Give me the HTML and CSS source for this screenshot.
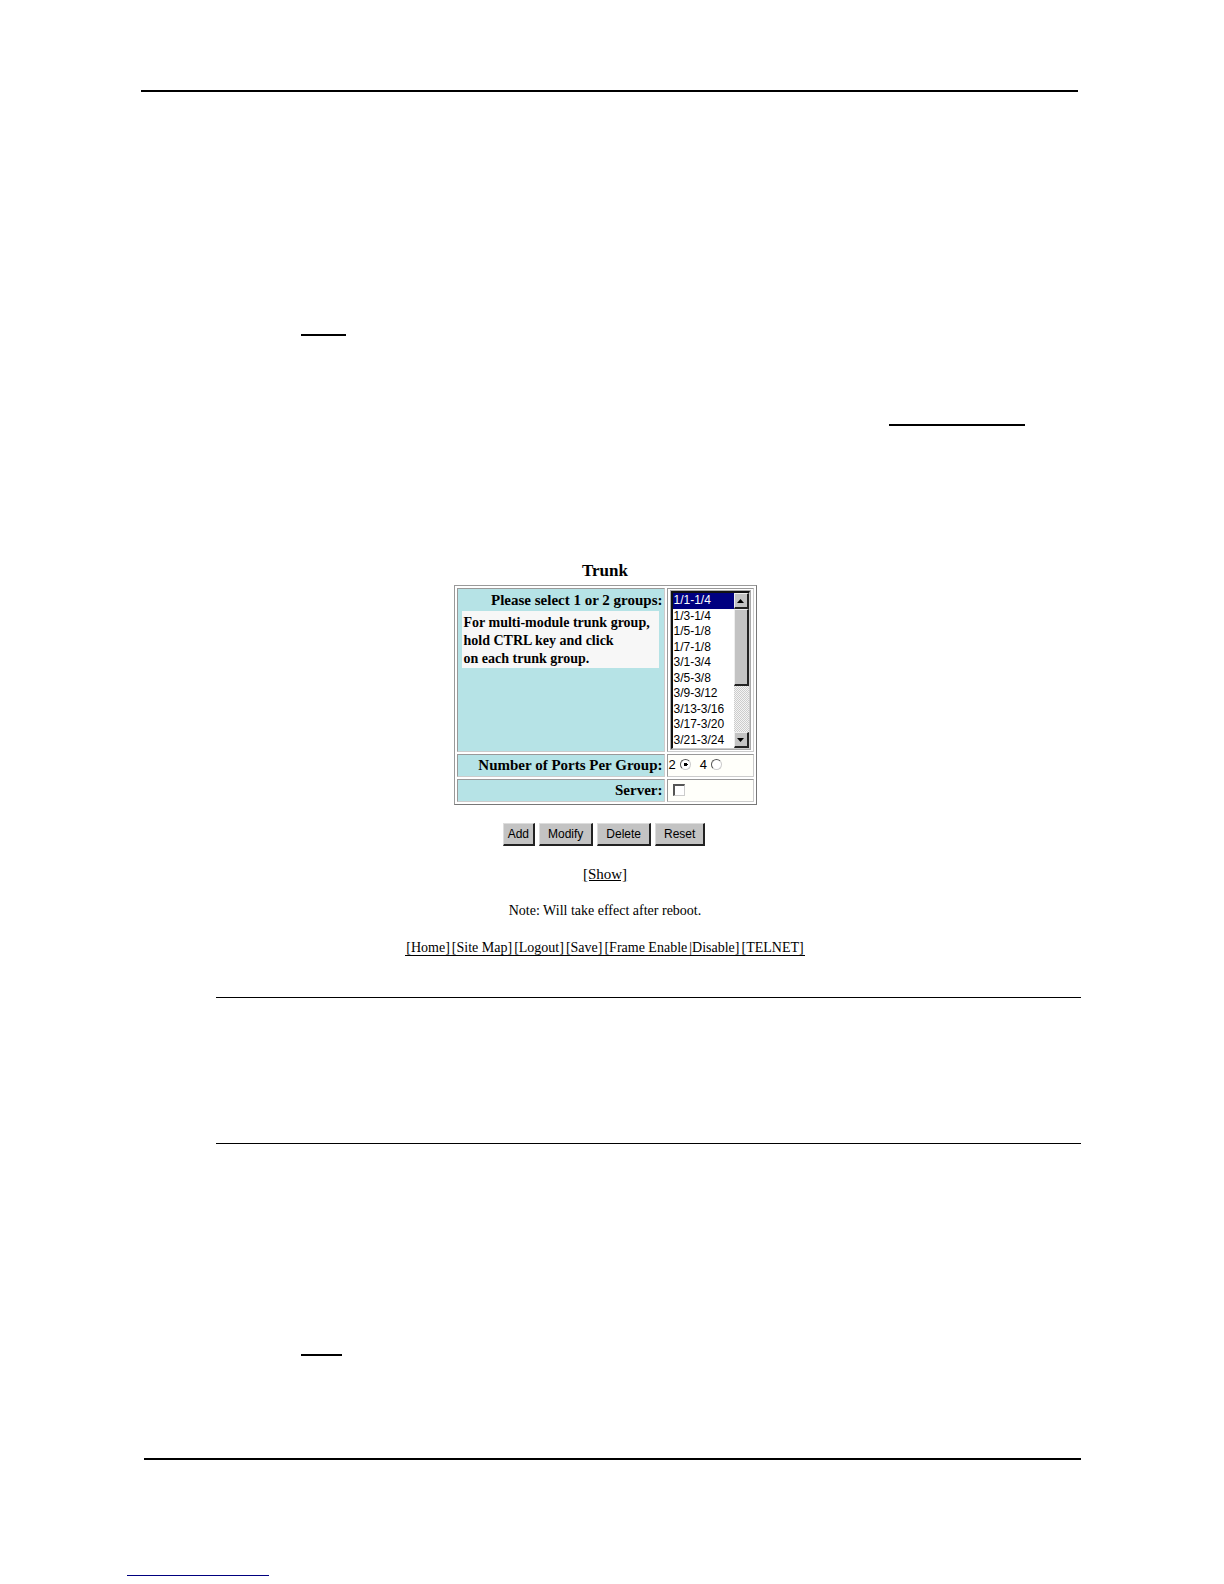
FILE: index.html
```html
<!DOCTYPE html>
<html lang="en">
<head>
  <meta charset="UTF-8" />
  <meta name="viewport" content="width=device-width, initial-scale=1.0"/>
  <title>Trunk</title>
  <link rel="stylesheet" href="styles.css">
</head>
<body>

  <div class="page">
    <hr class="rule rule-top">

    <div class="intro">
      <hr class="mark mark-first">
      <hr class="mark mark-wide">
    </div>

    <form class="trunk-form">
      <h1>Trunk</h1>

      <table class="trunk-table">
        <tr>
          <th class="group-cell">
            <label for="groups">Please select 1 or 2 groups:</label>
            <p class="hint">For multi-module trunk group,<br>hold CTRL key and click<br>on each trunk group.</p>
          </th>
          <td class="list-cell">
            <div class="list-frame">
              <select id="groups" class="group-list" size="10" multiple>
                <option selected>1/1-1/4</option>
                <option>1/3-1/4</option>
                <option>1/5-1/8</option>
                <option>1/7-1/8</option>
                <option>3/1-3/4</option>
                <option>3/5-3/8</option>
                <option>3/9-3/12</option>
                <option>3/13-3/16</option>
                <option>3/17-3/20</option>
                <option>3/21-3/24</option>
              </select>
              <div class="scrollbar" aria-hidden="true">
                <div class="scroll-part scroll-arrow">
                  <svg width="7" height="4" viewBox="0 0 7 4"><path d="M0 4h7L3.5 0z"/></svg>
                </div>
                <div class="scroll-track">
                  <div class="scroll-part scroll-thumb"></div>
                </div>
                <div class="scroll-part scroll-arrow">
                  <svg width="7" height="4" viewBox="0 0 7 4"><path d="M0 0h7L3.5 4z"/></svg>
                </div>
              </div>
            </div>
          </td>
        </tr>
        <tr>
          <th>Number of Ports Per Group:</th>
          <td>
            <div class="ports">
              <label>2<input type="radio" name="ports" value="2" checked></label>
              <label>4<input type="radio" name="ports" value="4"></label>
            </div>
          </td>
        </tr>
        <tr>
          <th><label for="server">Server:</label></th>
          <td><input type="checkbox" id="server"></td>
        </tr>
      </table>

      <div class="buttons">
        <button type="button" class="btn-add">Add</button>
        <button type="button">Modify</button>
        <button type="button">Delete</button>
        <button type="reset">Reset</button>
      </div>

      <p><a href="#">[Show]</a></p>
      <p class="note">Note: Will take effect after reboot.</p>
      <p class="links"><a href="#">[Home]</a><a href="#">[Site Map]</a><a href="#">[Logout]</a><a href="#">[Save]</a><a href="#">[Frame Enable</a><a href="#">|Disable]</a><a href="#">[TELNET]</a></p>
    </form>

    <div class="note-block"></div>

    <hr class="mark mark-last">
    <hr class="rule rule-bottom">
  </div>

  <a href="#" class="footer-link" aria-label="Manual home"></a>

</body>
</html>
```
FILE: styles.css
```css
body {
  margin: 0;
  background: #fff;
  color: #000;
  font-family: "Liberation Serif", "Times New Roman", serif;
  font-size: 15px;
  line-height: 18px;
}

.page {
  padding: 90px 143px 0 141px;
}

hr {
  height: 2px;
  margin: 0;
  border: 0;
  background: #000;
}

.rule-top {
  margin-right: 3px;
}

.rule-bottom {
  margin-left: 3px;
}

.mark {
  width: 45px;
  margin-left: 160px;
}

.intro {
  display: flow-root;
  height: 470px;
}

.mark-first {
  margin-top: 242px;
}

.mark-wide {
  width: 136px;
  margin: 88px 56px 0 auto;
}

.mark-last {
  width: 41px;
  margin-top: 210px;
  margin-bottom: 102px;
}

.trunk-form {
  display: flex;
  flex-direction: column;
  align-items: center;
  padding-right: 12px;
}

h1 {
  margin: 0 0 5px;
  font-size: 17px;
  line-height: 18px;
}

.trunk-table {
  border: 1px solid #999;
  border-right-color: #777;
  border-bottom-color: #777;
  border-spacing: 2px;
}

.trunk-table th,
.trunk-table td {
  box-sizing: border-box;
  height: 23px;
  padding: 0 1px 2px;
  border: 1px solid #999;
  border-right-color: #ccc;
  border-bottom-color: #ccc;
}

.trunk-table th {
  width: 208px;
  background: #b6e3e6;
  text-align: right;
}

.trunk-table td {
  width: 87px;
  background: #fffffa;
  font: 13px/18px "Liberation Sans", Arial, sans-serif;
}

.trunk-table .group-cell {
  padding-top: 2px;
  vertical-align: top;
}

.group-cell label {
  display: block;
}

.hint {
  margin: 2px 4px 0 3px;
  padding: 3px 0 0 2px;
  background: #f7f7f7;
  font-size: 14px;
  text-align: left;
  white-space: nowrap;
}

.trunk-table .list-cell {
  padding: 2px;
  background: #fff;
}

.list-frame {
  display: flex;
  box-sizing: border-box;
  height: 158px;
  margin: 0 1px;
  border: 2px solid #111;
  border-right: 1px solid #ccc;
  border-bottom: 1px solid #ccc;
  outline: 1px solid #aaa;
}

.group-list {
  flex: 1;
  min-width: 0;
  height: 155px;
  padding: 0;
  border: 0;
  border-radius: 0;
  outline: none;
  background: #fff;
  font: 12px/15px "Liberation Sans", Arial, sans-serif;
  overflow: hidden;
}

.group-list option {
  min-height: 15px;
  padding: 0 1px;
  color: #000;
}

/* ten rows share 155px */
.group-list option:nth-child(odd) {
  padding-bottom: 1px;
}

.group-list option:checked {
  background: #000080 linear-gradient(#000080, #000080);
  color: #fff;
}

.scrollbar {
  display: flex;
  flex-direction: column;
  width: 15px;
}

.scroll-part {
  box-sizing: border-box;
  border: 1px solid #eee;
  border-right: 2px solid #222;
  border-bottom: 2px solid #222;
  background: #c3c3c3;
}

.scroll-arrow {
  display: flex;
  align-items: center;
  justify-content: center;
  height: 16px;
}

.scroll-track {
  flex: 1;
  background: repeating-conic-gradient(#ccc 0 25%, #f4f4f4 0 50%) 0 0 / 2px 2px;
}

.scroll-thumb {
  height: 77px;
}

.ports {
  display: flex;
  gap: 9px;
}

.ports label {
  display: flex;
  align-items: center;
  gap: 4px;
}

input {
  appearance: none;
  display: block;
  box-sizing: border-box;
  width: 12px;
  height: 12px;
  margin: 0;
  border: 1px solid #555;
  border-right-color: #ccc;
  border-bottom-color: #ccc;
  background: #fff;
}

input[type="radio"] {
  width: 11px;
  height: 11px;
  border-radius: 50%;
}

input[type="radio"]:checked {
  background: radial-gradient(circle, #000 2px, #fff 2px);
}

input[type="checkbox"] {
  margin-left: 4px;
  border-width: 2px 1px 1px 2px;
}

.buttons {
  display: flex;
  gap: 4px;
  margin: 18px 2px 1px 0;
}

button {
  height: 23px;
  padding: 0 8px;
  border: 1px solid #ddd;
  border-right: 2px solid #222;
  border-bottom: 2px solid #222;
  background: #c3c3c3;
  font: 12px "Liberation Sans", Arial, sans-serif;
}

.btn-add {
  padding: 0 4px;
}

p {
  margin: 18px 0 0;
}

a {
  color: #000;
}

.note,
.links {
  font-size: 14px;
  line-height: 19px;
}

.links a {
  padding: 0 1px;
  border-bottom: 1px solid #000;
  text-decoration: none;
}

.note-block {
  height: 145px;
  margin: 40px 0 0 75px;
  border-top: 1px solid #000;
  border-bottom: 1px solid #000;
}

.footer-link {
  display: block;
  width: 142px;
  height: 1px;
  margin: 115px 0 8px 127px;
  background: #00007f;
}
```
